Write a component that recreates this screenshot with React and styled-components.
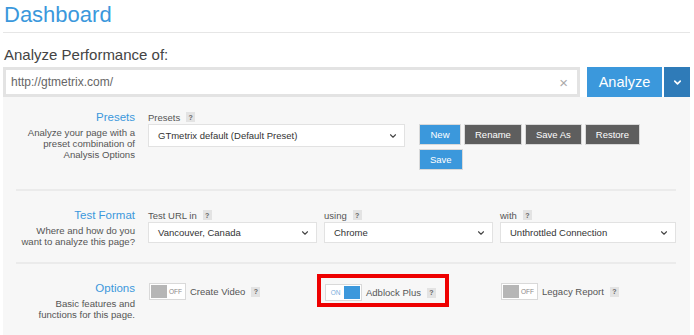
import React from "react";
import styled, { createGlobalStyle } from "styled-components";
import { ChevronDown } from "lucide-react";

const Global = createGlobalStyle`
  html, body { margin: 0; padding: 0; background: #fff; }
  body { font-family: "Liberation Sans", Arial, sans-serif; color: #444; }
  * { box-sizing: border-box; }
`;

const BLUE = "#3b98dc";

const Page = styled.div`
  width: 694px;
  padding: 0 4px 0 3px;
`;

const Title = styled.h1`
  margin: 0;
  padding: 2px 0 4px 1px;
  font-size: 22px;
  line-height: 26px;
  font-weight: 400;
  color: ${BLUE};
  border-bottom: 1px solid #e6e6e6;
`;

const AnalyzeLabel = styled.div`
  margin-top: 13px;
  padding-left: 1px;
  font-size: 15px;
  line-height: 18px;
  color: #444;
`;

const UrlRow = styled.div`
  display: flex;
  margin-top: 3px;
  height: 30px;
`;

const UrlInput = styled.div`
  flex: 1;
  display: flex;
  align-items: center;
  justify-content: space-between;
  border: 3px solid #e3e3e3;
  background: #fff;
  padding: 0 9px 0 5px;
  font-size: 12px;
  color: #666;
  margin-right: 7px;
`;

const Clear = styled.span`
  color: #aaa;
  font-size: 15px;
  line-height: 1;
`;

const AnalyzeButton = styled.div`
  width: 75px;
  background: ${BLUE};
  color: #fff;
  font-size: 14.5px;
  display: flex;
  align-items: center;
  justify-content: center;
`;

const MenuButton = styled.div`
  width: 26px;
  margin-left: 2px;
  background: #2f7bb8;
  color: #fff;
  display: flex;
  align-items: center;
  justify-content: center;
`;

const Panel = styled.div`
  background: #f7f7f7;
  padding: 0 14px 0 13px;
  height: 238px;
`;

const Section = styled.div`
  display: grid;
  grid-template-columns: 119px 1fr;
  column-gap: 13px;
  padding: ${(p) => (p.$first ? "13px" : "17px")} 0 15px;
  border-top: ${(p) => (p.$first ? "none" : "2px solid #ebebeb")};
`;

const LabelCol = styled.div`
  text-align: right;
`;

const ContentCol = styled.div`
  padding-bottom: 4px;
`;

const Heading = styled.div`
  font-size: 11.5px;
  line-height: 14px;
  color: ${BLUE};
`;

const Desc = styled.div`
  margin-top: 3px;
  font-size: 9.6px;
  line-height: 11px;
  color: #555;
`;

const Columns = styled.div`
  display: grid;
  grid-template-columns: 169px 169px 1fr;
  column-gap: 7px;
`;

const PresetRow = styled.div`
  display: flex;
  align-items: flex-start;
`;

const Field = styled.div`
  width: ${(p) => p.$w || "auto"};
`;

const FieldLabel = styled.div`
  display: flex;
  align-items: center;
  height: 14px;
  font-size: 9.5px;
  color: #555;
`;

const Help = styled.span`
  display: inline-flex;
  align-items: center;
  justify-content: center;
  width: 9px;
  height: 10px;
  margin-left: 6px;
  background: #e3e3e3;
  color: #666;
  font-size: 7px;
  font-weight: 700;
`;

const Select = styled.div`
  display: flex;
  align-items: center;
  justify-content: space-between;
  height: ${(p) => p.$h || 22}px;
  background: #fff;
  border: 1px solid #e2e2e2;
  padding: 0 6px 0 9px;
  font-size: 9.5px;
  color: #333;
`;

const Buttons = styled.div`
  display: flex;
  flex-wrap: wrap;
  gap: 4px 3px;
  width: 230px;
  margin: 14px 0 0 14px;
`;

const Button = styled.div`
  height: 21px;
  padding: 0 10px;
  border: 1px solid #d9d9d9;
  background: ${(p) => (p.$dark ? "#5e5e5e" : BLUE)};
  color: #fff;
  font-size: 9.5px;
  display: flex;
  align-items: center;
  justify-content: center;
  min-width: 42px;
`;

const OptionItem = styled.div`
  display: flex;
  align-items: center;
  margin: 2px 0 0 1px;
  font-size: 9.5px;
  color: #555;
`;

const Toggle = styled.div`
  display: flex;
  align-items: center;
  flex-direction: ${(p) => (p.$on ? "row-reverse" : "row")};
  width: 37px;
  height: 17px;
  padding: 1px;
  background: #fff;
  border: 1px solid #d9d9d9;
  margin-right: 4px;
`;

const Knob = styled.div`
  width: 16px;
  height: 13px;
  background: ${(p) => (p.$on ? BLUE : "#b6b6b6")};
`;

const ToggleText = styled.span`
  flex: 1;
  text-align: center;
  font-size: 6.5px;
  color: ${(p) => (p.$on ? "#7aaedb" : "#888")};
`;

const Highlight = styled.div`
  position: relative;
  display: inline-block;
  &::after {
    content: "";
    position: absolute;
    top: -8px;
    left: -7px;
    right: -13px;
    bottom: -6px;
    border: 4px solid #ee0000;
    pointer-events: none;
  }
`;

const Chevron = () => <ChevronDown size={10} strokeWidth={2.6} color="#444" />;

function Option({ label, on }) {
  return (
    <OptionItem>
      <Toggle $on={on}>
        <Knob $on={on} />
        <ToggleText $on={on}>{on ? "ON" : "OFF"}</ToggleText>
      </Toggle>
      {label}
      <Help>?</Help>
    </OptionItem>
  );
}

export default function App() {
  return (
    <Page>
      <Global />
      <Title>Dashboard</Title>
      <AnalyzeLabel>Analyze Performance of:</AnalyzeLabel>
      <UrlRow>
        <UrlInput>
          <span>http://gtmetrix.com/</span>
          <Clear>×</Clear>
        </UrlInput>
        <AnalyzeButton>Analyze</AnalyzeButton>
        <MenuButton>
          <ChevronDown size={11} strokeWidth={3.5} color="#fff" />
        </MenuButton>
      </UrlRow>
      <Panel>
        <Section $first>
          <LabelCol>
            <Heading>Presets</Heading>
            <Desc>
              Analyze your page with a<br />
              preset combination of<br />
              Analysis Options
            </Desc>
          </LabelCol>
          <ContentCol>
            <PresetRow>
              <Field $w="257px">
                <FieldLabel>
                  Presets<Help>?</Help>
                </FieldLabel>
                <Select $h={23}>
                  GTmetrix default (Default Preset)
                  <Chevron />
                </Select>
              </Field>
              <Buttons>
                <Button>New</Button>
                <Button $dark>Rename</Button>
                <Button $dark>Save As</Button>
                <Button $dark>Restore</Button>
                <Button>Save</Button>
              </Buttons>
            </PresetRow>
          </ContentCol>
        </Section>
        <Section>
          <LabelCol>
            <Heading>Test Format</Heading>
            <Desc>
              Where and how do you<br />
              want to analyze this page?
            </Desc>
          </LabelCol>
          <ContentCol>
            <Columns>
              <Field>
                <FieldLabel>
                  Test URL in<Help>?</Help>
                </FieldLabel>
                <Select $h={21}>
                  Vancouver, Canada
                  <Chevron />
                </Select>
              </Field>
              <Field>
                <FieldLabel>
                  using<Help>?</Help>
                </FieldLabel>
                <Select $h={21}>
                  Chrome
                  <Chevron />
                </Select>
              </Field>
              <Field>
                <FieldLabel>
                  with<Help>?</Help>
                </FieldLabel>
                <Select $h={21}>
                  Unthrottled Connection
                  <Chevron />
                </Select>
              </Field>
            </Columns>
          </ContentCol>
        </Section>
        <Section>
          <LabelCol>
            <Heading>Options</Heading>
            <Desc>
              Basic features and<br />
              functions for this page.
            </Desc>
          </LabelCol>
          <ContentCol>
            <Columns>
              <div>
                <Option label="Create Video" />
              </div>
              <div>
                <Highlight>
                  <Option label="Adblock Plus" on />
                </Highlight>
              </div>
              <div>
                <Option label="Legacy Report" />
              </div>
            </Columns>
          </ContentCol>
        </Section>
      </Panel>
    </Page>
  );
}
